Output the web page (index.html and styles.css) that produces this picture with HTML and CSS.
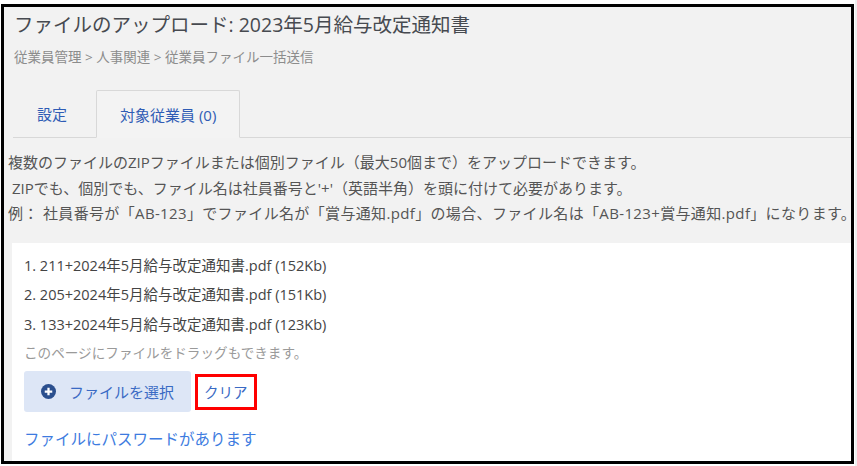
FILE: index.html
```html
<!DOCTYPE html>
<html lang="ja">
<head>
<meta charset="utf-8">
<title>ファイルのアップロード</title>
<link rel="stylesheet" href="styles.css">
</head>
<body>
<div class="frame">
  <header class="head">
    <h1 class="title">ファイルのアップロード: 2023年5月給与改定通知書</h1>
    <div class="crumbs">従業員管理 &gt; 人事関連 &gt; 従業員ファイル一括送信</div>
  </header>
  <nav class="tabs">
    <a class="tab">設定</a>
    <a class="tab tab-active">対象従業員 (0)</a>
  </nav>
  <div class="info">
    <p>複数のファイルのZIPファイルまたは個別ファイル（最大50個まで）をアップロードできます。</p>
    <p>&nbsp;ZIPでも、個別でも、ファイル名は社員番号と'+'（英語半角）を頭に付けて必要があります。</p>
    <p class="wide">例： 社員番号が「AB-123」でファイル名が「賞与通知.pdf」の場合、ファイル名は「AB-123+賞与通知.pdf」になります。</p>
  </div>
  <section class="panel">
    <ol class="files">
      <li>1. 211+2024年5月給与改定通知書.pdf (152Kb)</li>
      <li>2. 205+2024年5月給与改定通知書.pdf (151Kb)</li>
      <li>3. 133+2024年5月給与改定通知書.pdf (123Kb)</li>
    </ol>
    <div class="hint">このページにファイルをドラッグもできます。</div>
    <div class="actions">
      <button class="pick">
        <svg class="pick-icon" viewBox="0 0 16 16" width="15" height="15"><circle cx="8" cy="8" r="8" fill="#2b4f8e"/><path d="M8 4v8M4 8h8" stroke="#fff" stroke-width="2.4" stroke-linecap="butt"/></svg>
        <span>ファイルを選択</span>
      </button>
      <a class="clear">クリア</a>
    </div>
    <a class="pw">ファイルにパスワードがあります</a>
  </section>
</div>
</body>
</html>
```
FILE: styles.css
```css
html, body {
  margin: 0;
  padding: 0;
  background: #fff;
}
body {
  font-family: "Open Sans", "Noto Sans CJK JP", sans-serif;
  width: 857px;
  height: 466px;
  overflow: hidden;
  background: linear-gradient(to right, #fff 0, #fff 855px, #efefef 855px);
}
.frame {
  margin: 4px 3px 0 1px;
  height: 454px;
  border: 3px solid #000;
  background: #f2f2f2;
  display: flex;
  flex-direction: column;
}
.head {
  padding: 5px 0 0 10px;
}
.title {
  margin: 0;
  font-size: 19.5px;
  font-weight: normal;
  line-height: 26px;
  color: #474a50;
}
.crumbs {
  margin-top: 9px;
  font-size: 13.5px;
  line-height: 20px;
  color: #8c8c8c;
}
.tabs {
  display: flex;
  margin: 23px 0 0 9px;
  border-bottom: 1px solid #d8d8d8;
  height: 47px;
}
.tab {
  display: flex;
  align-items: center;
  padding: 0 24px;
  margin-right: 5px;
  font-size: 15px;
  color: #2f5cb5;
}
.tab-active {
  padding: 0 23px;
  border: 1px solid #d8d8d8;
  border-bottom-color: #f3f3f3;
  background: #f3f3f3;
  margin-bottom: -1px;
  border-radius: 2px 2px 0 0;
}
.info {
  padding: 12px 0 16px 4px;
}
.info p {
  margin: 0;
  font-size: 15px;
  line-height: 25.5px;
  color: #555;
  white-space: nowrap;
}
.info .wide {
  letter-spacing: 0.35px;
}
.panel {
  flex: 1;
  margin-left: 8px;
  background: #fff;
  padding: 8px 0 0 12px;
}
.files {
  list-style: none;
  margin: 0;
  padding: 0;
}
.files li {
  font-size: 14.5px;
  line-height: 29.5px;
  color: #444;
}
.hint {
  font-size: 13.6px;
  line-height: 27px;
  color: #9a9a9a;
}
.actions {
  display: flex;
  align-items: center;
  margin-top: 5px;
}
.pick {
  display: flex;
  align-items: center;
  gap: 13px;
  height: 41px;
  padding: 0 17px 0 17px;
  border: none;
  border-radius: 3px;
  background: #dde6f6;
  font-family: inherit;
  font-size: 15px;
  color: #3a6ac4;
}
.pick-icon {
  display: block;
}
.clear {
  margin-left: 4px;
  height: 30px;
  padding: 0 6px 0 6px;
  display: flex;
  align-items: center;
  border: 3px solid #f00;
  font-size: 14.5px;
  color: #3a6ac4;
}
.pw {
  display: block;
  margin-top: 15px;
  font-size: 15.5px;
  line-height: 24px;
  color: #3d7be0;
}
```
